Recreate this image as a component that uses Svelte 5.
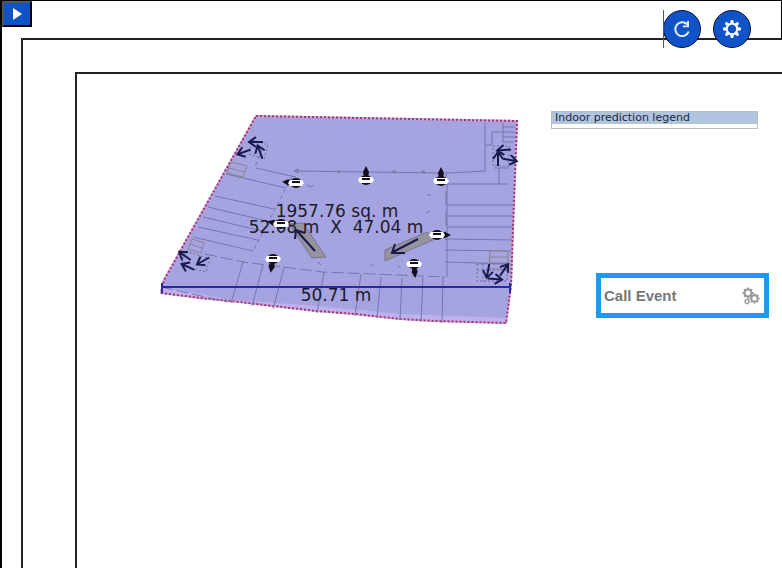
<script>
  const outline = 'M256 116L517 121L514 200L511 285L506 323L435 321L400 319L355 314L317 311L273 306L231 301L200 298L161 293L164 280Z';
  const bays = [
    'M226 174L286 188', 'M215 196L274 209', 'M208 207L267 221',
    'M203 217L262 231', 'M198 227L258 240', 'M193 237L253 251',
    'M256 168L296 177',
    'M447 184L508 184', 'M447 205L514 205', 'M447 216L513 216', 'M447 227L513 227',
    'M446 239L512 240', 'M445 250L511 251', 'M445 262L510 264',
    'M243 262L231 303', 'M263 265L252 306', 'M284 268L273 309', 'M324 272L317 313',
    'M361 274L355 316', 'M381 277L377 318', 'M402 278L400 320',
    'M423 277L421 322', 'M443 277L442 323'
  ];
  const markers = [
    { x: 296, y: 183, a: -85 },
    { x: 366, y: 180, a: 0 },
    { x: 441, y: 181, a: 0 },
    { x: 281, y: 224, a: -80 },
    { x: 437, y: 235, a: 90 },
    { x: 273, y: 259, a: 190 },
    { x: 414, y: 264, a: 175 }
  ];
  const arrows = [
    { x: 256, y: 142, a: 180 }, { x: 244, y: 152, a: 160 }, { x: 260, y: 152, a: 250 },
    { x: 504, y: 150, a: 175 }, { x: 498, y: 159, a: 270 }, { x: 510, y: 160, a: 10 },
    { x: 185, y: 256, a: 215 }, { x: 203, y: 261, a: 150 }, { x: 188, y: 267, a: 205 },
    { x: 488, y: 271, a: 100 }, { x: 504, y: 270, a: 305 }, { x: 495, y: 279, a: 5 }
  ];
  const teeth = [0, 45, 90, 135, 180, 225, 270, 315];
</script>

{#snippet gear(x, y, r)}
  <g transform="translate({x} {y})">
    <circle r={r * 0.62} fill="none" stroke="currentColor" stroke-width={r * 0.36} />
    {#each teeth as a}
      <path d="M{-r * 0.22} {-r * 0.7}L{-r * 0.18} {-r}H{r * 0.18}L{r * 0.22} {-r * 0.7}Z" fill="currentColor" transform="rotate({a})" />
    {/each}
  </g>
{/snippet}

<div class="page">
  <button class="play" aria-label="Play">
    <svg width="9" height="12" viewBox="0 0 9 12"><path d="M0 0L9 6L0 12Z" fill="#fff" /></svg>
  </button>
  <div class="actions">
    <button class="round" aria-label="Refresh">
      <svg width="18" height="18" viewBox="0 0 18 18">
        <path d="M14 4.2A6.9 6.9 0 1 0 15.7 11.5" fill="none" stroke="#e4ecfb" stroke-width="2" />
        <path d="M16 1V7.3H9.8V5.5H14V1Z" fill="#e4ecfb" />
      </svg>
    </button>
    <button class="round" aria-label="Settings">
      <svg width="20" height="20" viewBox="0 0 20 20">
        <circle cx="10" cy="10" r="5.2" fill="none" stroke="#f4f7ff" stroke-width="2" />
        {#each teeth as a}
          <path d="M8 4.6L8.8 1H11.2L12 4.6Z" fill="#f4f7ff" transform="rotate({a} 10 10)" />
        {/each}
      </svg>
    </button>
  </div>

  <div class="frame">
    <main class="sheet">
      <svg class="plan" width="380" height="240" viewBox="150 100 380 240" role="img" aria-label="Floor plan">
        <path d={outline} fill="#a6a4e0" />
        <path d="M163 287L231 300L317 306L400 314L506 318V323L400 319L317 311L231 301L161 293Z" fill="#bdb2ee" />
        <path d={outline} fill="none" stroke="#d9a0d8" stroke-width="2" />
        <path d={outline} fill="none" stroke="#923b78" stroke-width="2" stroke-dasharray="2 2" />

        <g fill="none" stroke="#7775ad" stroke-width="1">
          {#each bays as d}<path {d} />{/each}
          <path d="M295 171L444 173M447 173L485 171M485 123V172M447 183V277" />
          <path d="M292 177L253 251M262 149L255 167" stroke-dasharray="4 3" />
          <path d="M205 254L243 262L323 272L445 277M161 287L228 302" stroke-dasharray="12 4" />
          <path d="M446 171V240" stroke-dasharray="14 6" />
          <path d="M485 145H492V132H503M503 123V142M503 127H515M503 132H515M503 137H515M503 142H514M499 169V184M494 168H509" />
          <path d="M294 171l4 -2v4zM336 172l3 -2v4M392 172l3 -2v4M421 172l3 -2v4M307 185l4 2 3 -2M427 195h4M426 213l4 -2M371 266l3 -2M398 266l3 2M318 262l3 3" />
        </g>
        <g fill="none" stroke="#86858f" stroke-width="1">
          <path d="M231 162L247 166L243 177L227 173ZM229 168L245 172M192 239L204 243L201 253L188 249ZM190 244L202 248M490 251H508V269H489ZM490 257H508M490 263H508" />
          <path d="M253 140L268 145L264 159L249 154ZM493 146H509V166H493ZM186 251L210 259L206 272L181 265ZM477 264H507V281H477ZM477 270H507M483 264V281" stroke="#6d6b99" stroke-dasharray="2 2" />
        </g>

        <g stroke="#77758c" stroke-width="1" fill="#94939f">
          <path d="M289 224L303 223L326 257L312 258Z" />
          <path d="M385 250L427 232L435 239L385 261Z" />
        </g>
        <path d="M162 287H510M162 283V293M510 283V293" fill="none" stroke="#2929a5" stroke-width="2" />

        <g class="measure">
          <text x="337" y="217">1957.76 sq. m</text>
          <text x="336" y="233">52.08 m&nbsp; X&nbsp; 47.04 m</text>
          <text x="336" y="301">50.71 m</text>
        </g>

        {#each markers as m}
          <g transform="translate({m.x} {m.y})">
            <path d="M-2 -3L-3 -8L0 -14L3 -8L2 -3Z" fill="#11101c" transform="rotate({m.a})" />
            <ellipse rx="6" ry="5" fill="#11101c" />
            <path d="M-6 -3H6L8 0L6 3H-6L-8 0Z" fill="#fff" />
            <path d="M-4 -1H4" stroke="#11101c" stroke-width="2" />
          </g>
        {/each}
        {#each arrows as r}
          <path d="M-7 0H6M0 -5L7 0L0 5" fill="none" stroke="#19194c" stroke-width="2" transform="translate({r.x} {r.y}) rotate({r.a})" />
        {/each}
        <path d="M315 251L297 231M295 239L296 230L305 233M418 239L393 252M395 244L392 253L405 253" fill="none" stroke="#19194c" stroke-width="2" />
      </svg>

      <aside>
        <section class="legend">
          <h2>Indoor prediction legend</h2>
        </section>
        <button class="event">
          <span>Call Event</span>
          <svg width="18" height="18" viewBox="0 0 18 18">
            {@render gear(6, 6, 5.5)}
            {@render gear(12.5, 11.5, 5)}
            {@render gear(5, 14.5, 3)}
          </svg>
        </button>
      </aside>
    </main>
  </div>
</div>

<style>
  :global(body) {
    background: #fff;
    font-family: "Liberation Sans", Arial, sans-serif;
  }
  .page {
    position: relative;
    display: flex;
    box-sizing: border-box;
    min-height: 100vh;
    padding: 37px 0 0 19px;
    border-top: 1px solid #000;
    border-left: 2px solid #000;
    overflow: hidden;
  }
  .page::after {
    content: "";
    position: absolute;
    top: 0;
    right: 0;
    width: 1px;
    height: 38px;
    background: #000;
  }
  button {
    padding: 0;
    cursor: pointer;
  }
  .play {
    position: absolute;
    top: 0;
    left: 0;
    display: flex;
    align-items: center;
    justify-content: center;
    box-sizing: border-box;
    width: 30px;
    height: 26px;
    border: 2px solid #000;
    border-top-color: #555;
    border-left-color: #555;
    background: #1053c8;
  }
  .actions {
    position: absolute;
    top: 9px;
    right: 31px;
    display: flex;
    gap: 12px;
  }
  .actions::before {
    content: "";
    position: absolute;
    top: 0;
    left: 0;
    width: 1px;
    height: 100%;
    background: #555;
  }
  .round {
    display: flex;
    align-items: center;
    justify-content: center;
    box-sizing: border-box;
    width: 38px;
    height: 38px;
    border: 1px solid #06142f;
    border-radius: 50%;
    background: #1053c8;
  }
  .frame {
    flex: 1;
    display: flex;
    padding: 32px 0 0 52px;
    border-top: 2px solid #222;
    border-left: 2px solid #222;
  }
  .sheet {
    flex: 1;
    display: flex;
    justify-content: space-between;
    align-items: flex-start;
    padding: 26px 13px 0 73px;
    border-top: 2px solid #222;
    border-left: 2px solid #222;
  }
  .plan {
    flex: none;
  }
  .measure {
    font-family: "DejaVu Sans", Verdana, sans-serif;
    font-size: 17px;
    fill: #1b1a2b;
    text-anchor: middle;
  }
  aside {
    display: flex;
    flex-direction: column;
    align-items: flex-end;
    gap: 144px;
    padding-top: 11px;
  }
  .legend {
    box-sizing: border-box;
    width: 207px;
    height: 18px;
    margin-right: 11px;
    border: 1px solid #bbb;
    background: #fff;
  }
  h2 {
    margin: 0;
    padding-left: 3px;
    background: #b0c4de;
    color: #1c2a3c;
    font: 11px/12px "DejaVu Sans", Verdana, sans-serif;
  }
  .event {
    display: flex;
    align-items: center;
    justify-content: space-between;
    box-sizing: border-box;
    width: 173px;
    height: 45px;
    padding: 0 4px 0 3px;
    border: 5px solid #1a9bf3;
    background: #fff;
    color: #777;
    font: bold 15px "Liberation Sans", Arial, sans-serif;
  }
  .event svg {
    color: #999;
  }
</style>
